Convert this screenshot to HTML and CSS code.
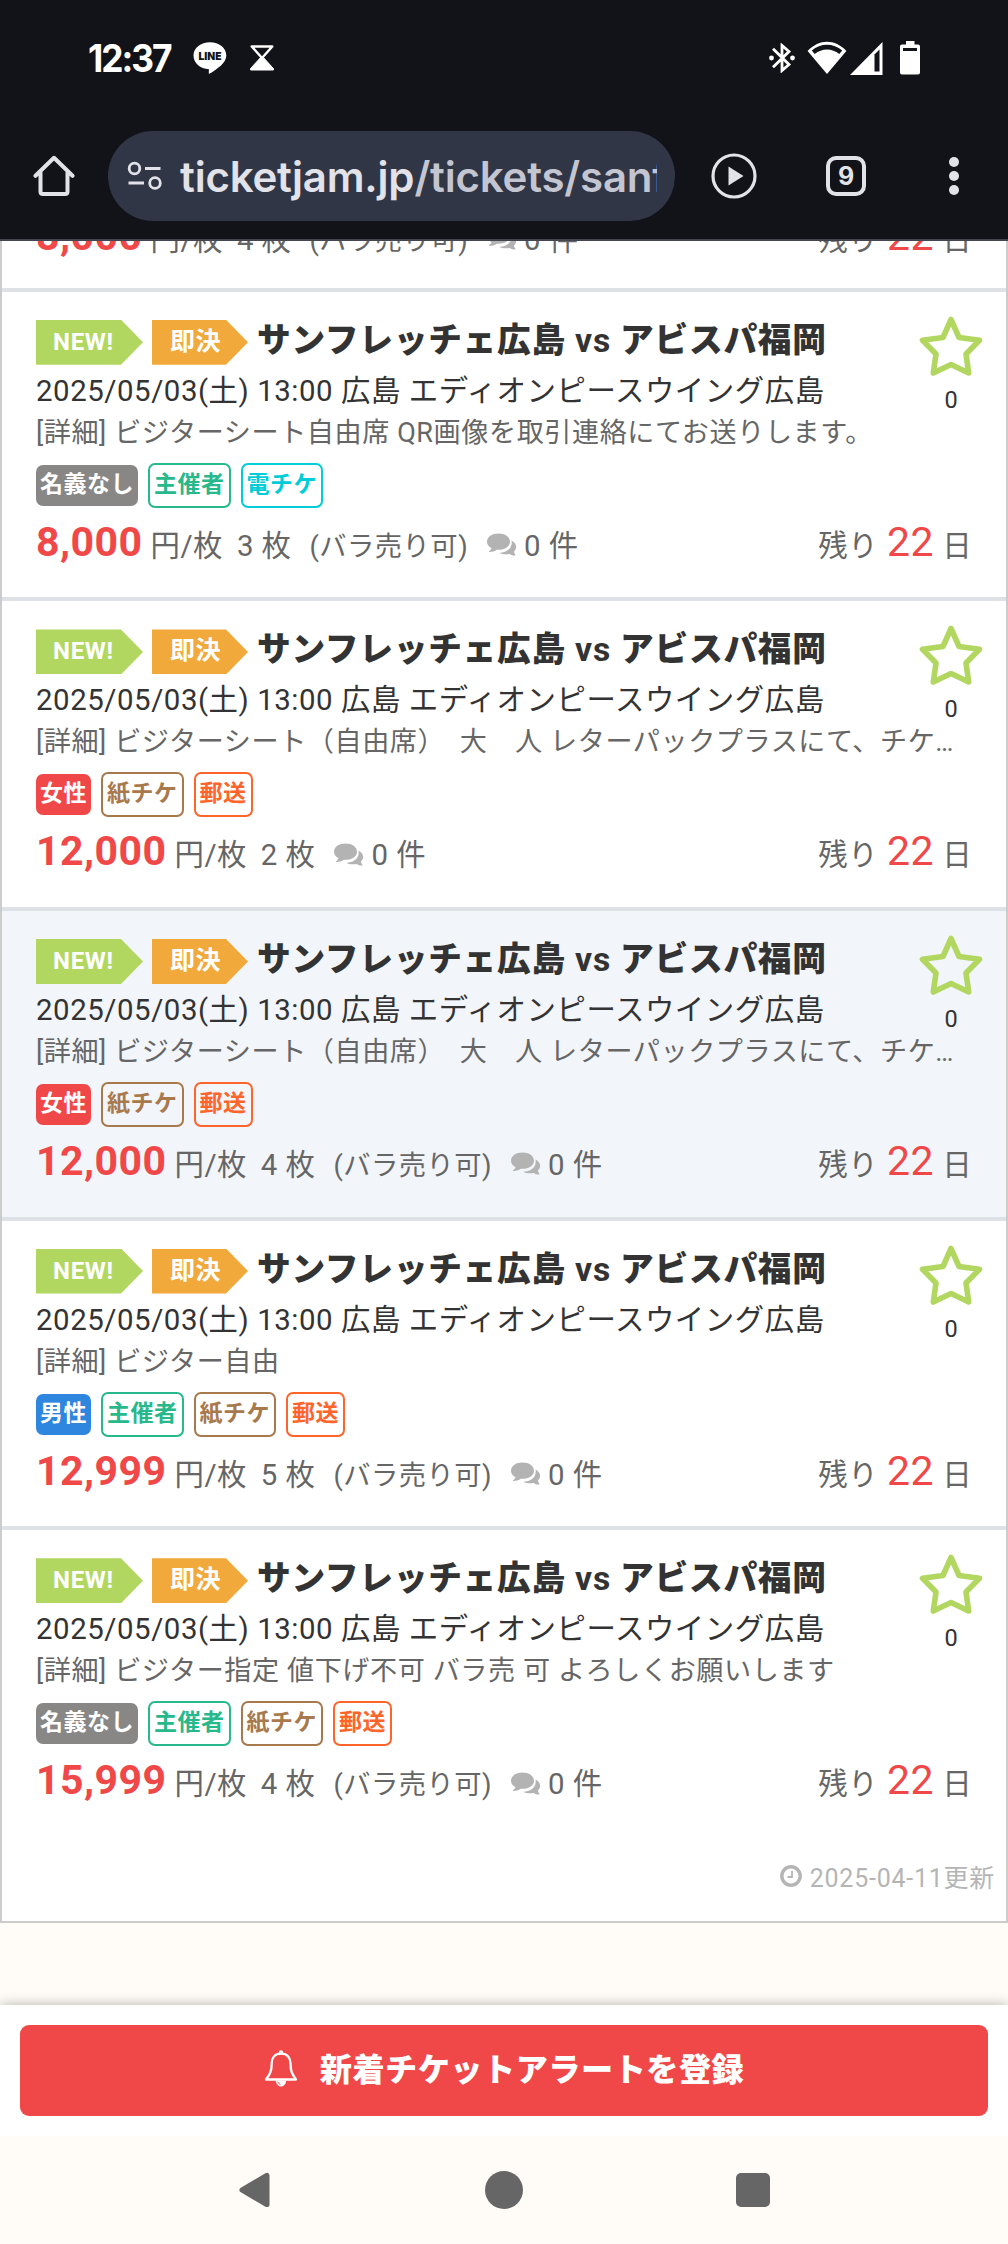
FILE: index.html
```html
<!DOCTYPE html>
<html lang="ja">
<head>
<meta charset="utf-8">
<title>チケット一覧</title>
<link rel="stylesheet" href="styles.css">
</head>
<body>
<svg class="defs" aria-hidden="true">
  <symbol id="star" viewBox="0 0 64 62"><path d="M32 3.500 L40 21.500 L60.500 24.300 L47 38 L49.700 57 L32 48.500 L14.300 57 L17 38 L3.500 24.300 L24 21.500Z" fill="none" stroke="#b2d761" stroke-width="5.600" stroke-linejoin="round"/></symbol>
  <symbol id="chat" viewBox="0 0 30 24"><path d="M24.500 7.500 C29 9.500 31 14.500 27 18.500 C27 20.500 28.500 21.500 28.500 22.200 C28.300 23.200 24.500 22.200 22.800 20.900 C18.500 21.800 14.500 21 12.500 19.700 C19.500 19.600 26 15 24.500 7.500Z" fill="#b3b3b3"/><path d="M11.500 0.500 C18 0.500 23 4 23 8.700 C23 13.500 17.500 17.300 9.800 16.700 C7.800 18.300 3.500 19.300 2 18.900 C1.500 18.200 4.500 17 4.400 15 C1.800 13.700 0 11.500 0 8.700 C0 4 5 .5 11.500 .5Z" fill="#b3b3b3"/></symbol>
</svg>

<header class="chrome">
  <div class="status">
    <span class="clock">12:37</span>
    <svg class="i-line" width="34" height="33" viewBox="0 0 34 33"><path d="M17 .3 C26.200 .3 33.300 6 33.300 13.400 C33.300 20.500 25 26.500 16.300 31.800 C15.500 32 15.800 30 16 27.300 C7 27 .5 21 .5 13.600 C.5 6 7.800 .3 17 .3Z" fill="#fff"/><text x="17" y="18.300" text-anchor="middle" textLength="23" lengthAdjust="spacingAndGlyphs" class="line-text">LINE</text></svg>
    <svg class="i-glass" width="24" height="26" viewBox="0 0 24 26"><path d="M1.700 1.500 H22.300 L12 13Z" fill="none" stroke="#fff" stroke-width="2.400" stroke-linejoin="round"/><path d="M12 11 L23.400 23.500 V25 H.6 V23.500Z" fill="#fff" stroke="#fff" stroke-linejoin="round"/></svg>
    <span class="grow"></span>
    <svg class="i-bt" width="26" height="30" viewBox="0 0 26 30"><path d="M4 5.800 L20 21.500 L13 27.500 V2.500 L20 8.500 L4 24.200" fill="none" stroke="#fff" stroke-width="2.800"/><circle cx="2.500" cy="15" r="2.400" fill="#fff"/><circle cx="23.500" cy="15" r="2.400" fill="#fff"/></svg>
    <svg class="i-wifi" width="40" height="34" viewBox="0 0 40 34"><path d="M20 33 L.6 10 C12 -2.400 28 -2.400 39.400 10Z" fill="#fff"/><path d="M4.800 9.500 C13.500 1.800 26.500 1.800 35.200 9.500 L32.300 13 C25 7 15 7 7.700 13Z" fill="#121318"/></svg>
    <svg class="i-cell" width="33" height="33" viewBox="0 0 33 33"><path d="M0 33 L32.500 0 V33Z" fill="#fff"/><path d="M24.500 12.500 L29.500 7.500 V29.500 H24.500Z" fill="#121318"/></svg>
    <svg class="i-batt" width="20" height="34" viewBox="0 0 20 34"><path d="M6 0H14.500V3.500H18Q20 3.500 20 5.500V31.500Q20 33.500 18 33.500H2Q0 33.500 0 31.500V5.500Q0 3.500 2 3.500H6Z" fill="#fff"/><path d="M3 7H17V10H3Z" fill="#121318"/></svg>
  </div>
  <div class="toolbar">
    <svg class="i-home" width="42" height="42" viewBox="0 0 42 42"><path d="M2.500 20.800 L21 2.800 L39.500 20.800 M7.500 17.500 V36.500 Q7.500 39 10 39 H32 Q34.500 39 34.500 36.500 V17.500" fill="none" stroke="#e2e2e9" stroke-width="4" stroke-linecap="round" stroke-linejoin="round"/></svg>
    <div class="omnibox">
      <svg width="36" height="30" viewBox="0 0 36 30" fill="none" stroke="#e2e2e9" stroke-width="2.800"><circle cx="7.500" cy="7.500" r="5.300"/><path d="M18 7.500H33.500M1.500 22H17"/><circle cx="28" cy="22" r="5.300"/></svg>
      <div class="url">ticketjam.jp<span>/tickets/sanf</span></div>
    </div>
    <svg class="i-play" width="46" height="46" viewBox="0 0 46 46"><circle cx="23" cy="23" r="21" fill="none" stroke="#e2e2e9" stroke-width="3.200"/><path d="M17.500 13.500 V32.500 L32.500 23Z" fill="#e2e2e9"/></svg>
    <div class="tabs">9</div>
    <div class="dots"><i></i><i></i><i></i></div>
  </div>
</header>

<main class="list">
  <article class="item cut">
    <div class="deal"><b>8,000</b><span class="unit">円/枚</span><span class="qty">4 枚</span><span class="split">(バラ売り可)</span><svg class="chat"><use href="#chat"/></svg><span>0 件</span><span class="left">残り<em>22</em>日</span></div>
  </article>

  <article class="item">
    <div class="top"><div class="info"><h2><span class="flag new">NEW!</span><span class="flag buy">即決</span><span class="name">サンフレッチェ広島 <span>vs</span> アビスパ福岡</span></h2><p class="date">2025/05/03(土) 13:00 広島 エディオンピースウイング広島</p></div><div class="fav"><svg><use href="#star"/></svg>0</div></div>
    <p class="detail">[詳細] ビジターシート自由席 QR画像を取引連絡にてお送りします。</p>
    <div class="badges"><span class="solid gray">名義なし</span><span class="green">主催者</span><span class="cyan">電チケ</span></div>
    <div class="deal"><b>8,000</b><span class="unit">円/枚</span><span class="qty">3 枚</span><span class="split">(バラ売り可)</span><svg class="chat"><use href="#chat"/></svg><span>0 件</span><span class="left">残り<em>22</em>日</span></div>
  </article>

  <article class="item">
    <div class="top"><div class="info"><h2><span class="flag new">NEW!</span><span class="flag buy">即決</span><span class="name">サンフレッチェ広島 <span>vs</span> アビスパ福岡</span></h2><p class="date">2025/05/03(土) 13:00 広島 エディオンピースウイング広島</p></div><div class="fav"><svg><use href="#star"/></svg>0</div></div>
    <p class="detail">[詳細] ビジターシート（自由席）&nbsp;&nbsp;大　人 レターパックプラスにて、チケ…</p>
    <div class="badges"><span class="solid red">女性</span><span class="brown">紙チケ</span><span class="orange">郵送</span></div>
    <div class="deal"><b>12,000</b><span class="unit">円/枚</span><span class="qty">2 枚</span><svg class="chat"><use href="#chat"/></svg><span>0 件</span><span class="left">残り<em>22</em>日</span></div>
  </article>

  <article class="item seen">
    <div class="top"><div class="info"><h2><span class="flag new">NEW!</span><span class="flag buy">即決</span><span class="name">サンフレッチェ広島 <span>vs</span> アビスパ福岡</span></h2><p class="date">2025/05/03(土) 13:00 広島 エディオンピースウイング広島</p></div><div class="fav"><svg><use href="#star"/></svg>0</div></div>
    <p class="detail">[詳細] ビジターシート（自由席）&nbsp;&nbsp;大　人 レターパックプラスにて、チケ…</p>
    <div class="badges"><span class="solid red">女性</span><span class="brown">紙チケ</span><span class="orange">郵送</span></div>
    <div class="deal"><b>12,000</b><span class="unit">円/枚</span><span class="qty">4 枚</span><span class="split">(バラ売り可)</span><svg class="chat"><use href="#chat"/></svg><span>0 件</span><span class="left">残り<em>22</em>日</span></div>
  </article>

  <article class="item">
    <div class="top"><div class="info"><h2><span class="flag new">NEW!</span><span class="flag buy">即決</span><span class="name">サンフレッチェ広島 <span>vs</span> アビスパ福岡</span></h2><p class="date">2025/05/03(土) 13:00 広島 エディオンピースウイング広島</p></div><div class="fav"><svg><use href="#star"/></svg>0</div></div>
    <p class="detail">[詳細] ビジター自由</p>
    <div class="badges"><span class="solid blue">男性</span><span class="green">主催者</span><span class="brown">紙チケ</span><span class="orange">郵送</span></div>
    <div class="deal"><b>12,999</b><span class="unit">円/枚</span><span class="qty">5 枚</span><span class="split">(バラ売り可)</span><svg class="chat"><use href="#chat"/></svg><span>0 件</span><span class="left">残り<em>22</em>日</span></div>
  </article>

  <article class="item last">
    <div class="top"><div class="info"><h2><span class="flag new">NEW!</span><span class="flag buy">即決</span><span class="name">サンフレッチェ広島 <span>vs</span> アビスパ福岡</span></h2><p class="date">2025/05/03(土) 13:00 広島 エディオンピースウイング広島</p></div><div class="fav"><svg><use href="#star"/></svg>0</div></div>
    <p class="detail">[詳細] ビジター指定 値下げ不可 バラ売 可 よろしくお願いします</p>
    <div class="badges"><span class="solid gray">名義なし</span><span class="green">主催者</span><span class="brown">紙チケ</span><span class="orange">郵送</span></div>
    <div class="deal"><b>15,999</b><span class="unit">円/枚</span><span class="qty">4 枚</span><span class="split">(バラ売り可)</span><svg class="chat"><use href="#chat"/></svg><span>0 件</span><span class="left">残り<em>22</em>日</span></div>
  </article>

  <div class="updated"><svg width="22" height="22" viewBox="0 0 22 22" fill="none" stroke="#b5b5b5"><circle cx="11" cy="11" r="9.200" stroke-width="3.400"/><path d="M12 5.800V12H7.500" stroke-width="1.800"/></svg>2025-04-11更新</div>
</main>

<div class="cta">
  <a class="alert"><svg width="34" height="37" viewBox="0 0 34 37"><path d="M17 3.600 C10.500 3.600 7.700 8 7.700 13.500 C7.700 22 5.500 24.500 2 29.500 H32 C28.500 24.500 26.500 22 26.500 13.500 C26.500 8 23.500 3.600 17 3.600Z" fill="none" stroke="#fff" stroke-width="2.300" stroke-linejoin="round"/><circle cx="17" cy="2.400" r="2.200" fill="#fff"/><path d="M11.800 30.500 H22.200 C22.200 34 19.500 36.500 17 36.500 C14.500 36.500 11.800 34 11.800 30.500Z" fill="#fff"/><path d="M13.800 31.700 Q14.500 34 16.500 34.700" fill="none" stroke="#f04848" stroke-width=".9"/></svg><span>新着チケットアラートを登録</span></a>
</div>

<nav class="nav">
  <svg width="34" height="38" viewBox="0 0 34 38"><path d="M3 19 L30 3 V35Z" fill="#666" stroke="#666" stroke-width="6" stroke-linejoin="round" transform="translate(1.500 1.900) scale(.91 .9)"/></svg>
  <i class="round"></i>
  <i class="square"></i>
</nav>
</body>
</html>
```

FILE: styles.css
```css
* { box-sizing: border-box; }
body {
  margin: 0;
  width: 1008px;
  height: 2244px;
  overflow: hidden;
  display: flex;
  flex-direction: column;
  background: #fffcf7;
  color: #333;
  font-family: Roboto, "Noto Sans CJK JP", sans-serif;
  font-size: 29.400px;
  letter-spacing: .47px;
}
h2, p { margin: 0; }
svg { display: block; flex: none; }
.defs { position: absolute; width: 0; height: 0; }
.grow { flex: 1; }

/* Browser chrome */
.chrome { height: 241px; flex: none; background: #121318; border-bottom: 2px solid #44464f; letter-spacing: 0; }
.status { height: 116px; padding: 0 88px 0 88px; display: flex; align-items: center; color: #fff; }
.clock { width: 105px; font: 700 38px/1 Inter, sans-serif; letter-spacing: -2.200px; transform: scaleX(.93); transform-origin: left; }
.line-text { font: 900 10.5px Inter, sans-serif; fill: #121318; letter-spacing: 0; }
.i-glass { margin-left: 23px; }
.i-wifi { margin-left: 12px; }
.i-cell { margin-left: 3px; }
.i-batt { margin-left: 17px; margin-top: -1px; }
.toolbar { height: 120px; display: flex; align-items: center; padding-left: 33px; }
.omnibox { width: 567px; height: 90px; margin-left: 33px; border-radius: 45px; background: #313646; display: flex; align-items: center; padding-left: 19px; }
.url { width: 477px; margin: 2px 0 0 17px; overflow: hidden; white-space: nowrap; color: #e2e2e9; font: 600 42px/60px Inter, sans-serif; letter-spacing: -.2px; }
.url span { color: #c3c5d0; }
.i-play { margin-left: 36px; }
.tabs { width: 40px; height: 40px; margin-left: 69px; border: 4px solid #e2e2e9; border-radius: 10px; color: #e2e2e9; font: 700 25px/32px Inter, sans-serif; text-align: center; }
.dots { margin-left: 83px; display: grid; gap: 4px; }
.dots i { width: 10px; height: 10px; border-radius: 50%; background: #e2e2e9; }

/* Ticket list */
.list { height: 1682px; flex: none; background: #fff; border: 2px solid #ccc; border-top: 0; }
.item { height: 309.600px; padding: 28px 0 0 34px; border-bottom: 4px solid #dee2e6; }
.item.cut { height: 50.800px; padding-top: 0; padding-bottom: 27px; display: flex; flex-direction: column; justify-content: flex-end; overflow: hidden; }
.item.seen { background: #f2f5fa; }
.item.last { border-bottom-color: #fff; }
.top { display: flex; justify-content: space-between; height: 91px; }
.info h2 { display: flex; height: 45px; font-size: 32px; }
.flag { height: 45px; color: #fff; font-size: 24px; line-height: 44px; font-weight: 700; clip-path: polygon(0 0, calc(100% - 22px) 0, 100% 50%, calc(100% - 22px) 100%, 0 100%); }
.new { width: 107px; padding-left: 17px; background: #b2d761; letter-spacing: .7px; }
.buy { width: 96px; margin-left: 9px; padding-left: 18px; background: #f2a93b; font-size: 25px; line-height: 43px; }
.name { margin-left: 9px; line-height: 42px; font-size: 33.700px; letter-spacing: .75px; font-weight: 900; white-space: nowrap; }
.name span { font-weight: 700; }
.date { line-height: 53px; letter-spacing: .56px; white-space: nowrap; }
.fav { width: 64px; margin: -4px 23px 0 0; text-align: center; font-size: 23.500px; line-height: 40px; letter-spacing: 0; }
.fav svg { width: 64px; height: 62px; margin-bottom: 2px; }
.detail { height: 42px; line-height: 44px; font-size: 27.100px; letter-spacing: .58px; color: #666; white-space: nowrap; }
.badges { display: flex; align-items: center; gap: 10px; height: 45px; margin-top: 10px; font-size: 23px; letter-spacing: .5px; font-weight: 700; }
.badges span { height: 45px; padding: 0 4px; border: 2px solid; border-radius: 7px; line-height: 40px; }
.badges .solid { height: 41px; border: 0; color: #fff; line-height: 40px; }
.gray { background: #888785; }
.red { background: #f04848; }
.blue { background: #2e86de; }
.badges .green { color: #27b88b; }
.badges .cyan { color: #00cdd7; }
.badges .brown { color: #a8794c; }
.badges .orange { color: #ff642b; }
.deal { display: flex; align-items: baseline; height: 50px; margin-top: 9px; padding-right: 34px; line-height: 50px; color: #666; white-space: nowrap; }
.deal b { font-size: 41px; color: #f04848; }
.unit { margin-left: 8px; }
.qty { margin-left: 14px; }
.split { margin-left: 18px; font-size: 27.300px; }
.chat { width: 30px; height: 24px; margin: 7px 7px 0 19px; align-self: center; }
.left { margin-left: auto; }
.left em { margin: 0 8px 0 9px; font-style: normal; font-size: 41px; color: #f04848; }
.updated { display: flex; justify-content: flex-end; align-items: center; gap: 8px; height: 72px; padding-right: 11px; color: #b5b5b5; font-size: 25px; letter-spacing: .75px; }

/* Alert bar */
.cta { height: 131px; flex: none; margin-top: 82px; padding: 20px; background: #fff; box-shadow: 0 0 12px rgba(0, 0, 0, .3); clip-path: inset(-20px 0 0 0); }
.alert { height: 91px; display: flex; align-items: center; justify-content: center; gap: 22px; padding-bottom: 5px; border-radius: 9px; background: #f04848; color: #fff; font-size: 32.200px; font-weight: 900; }
.alert span { padding-bottom: 3px; }

/* System navigation */
.nav { flex: 1; display: flex; align-items: center; justify-content: space-between; padding: 0 238px; }
.round { width: 38px; height: 38px; border-radius: 50%; background: #666; }
.square { width: 34px; height: 34px; border-radius: 5px; background: #666; }
```
